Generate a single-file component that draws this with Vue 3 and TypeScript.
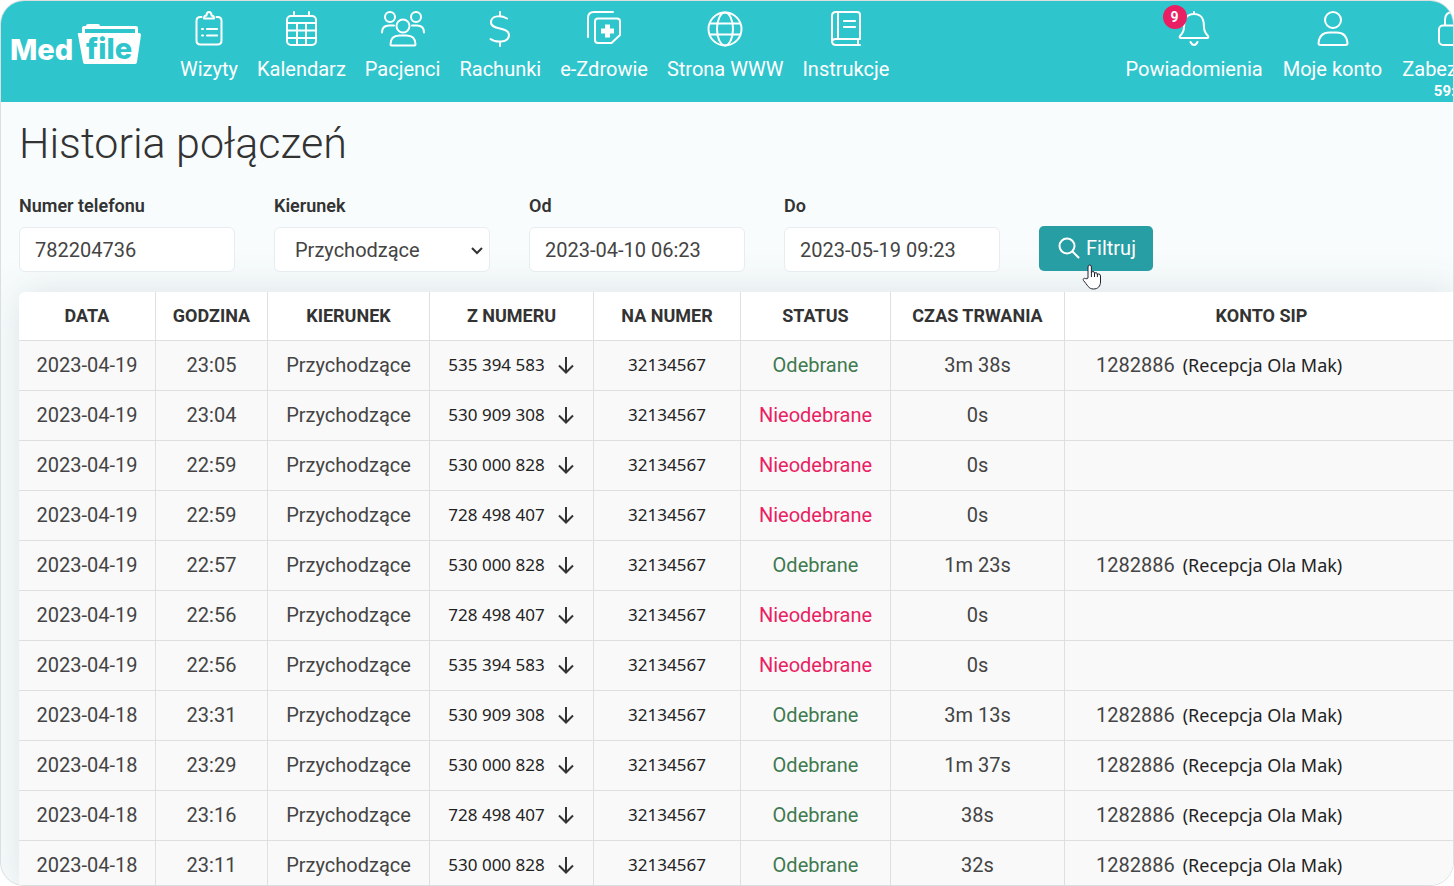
<script setup lang="ts">
import { ref } from 'vue'

interface NavItem {
  label: string
  icon: string
}

interface Call {
  date: string
  time: string
  from: string
  answered: boolean
  duration: string
  sip: boolean
}

const mainNav: NavItem[] = [
  { label: 'Wizyty', icon: 'clipboard' },
  { label: 'Kalendarz', icon: 'calendar' },
  { label: 'Pacjenci', icon: 'people' },
  { label: 'Rachunki', icon: 'dollar' },
  { label: 'e-Zdrowie', icon: 'health' },
  { label: 'Strona WWW', icon: 'globe' },
  { label: 'Instrukcje', icon: 'book' },
]

const phone = ref('782204736')
const direction = ref('Przychodzące')
const dateFrom = ref('2023-04-10 06:23')
const dateTo = ref('2023-05-19 09:23')

const columns = ['Data', 'Godzina', 'Kierunek', 'Z numeru', 'Na numer', 'Status', 'Czas trwania', 'Konto SIP']

const calls: Call[] = [
  { date: '2023-04-19', time: '23:05', from: '535 394 583', answered: true, duration: '3m 38s', sip: true },
  { date: '2023-04-19', time: '23:04', from: '530 909 308', answered: false, duration: '0s', sip: false },
  { date: '2023-04-19', time: '22:59', from: '530 000 828', answered: false, duration: '0s', sip: false },
  { date: '2023-04-19', time: '22:59', from: '728 498 407', answered: false, duration: '0s', sip: false },
  { date: '2023-04-19', time: '22:57', from: '530 000 828', answered: true, duration: '1m 23s', sip: true },
  { date: '2023-04-19', time: '22:56', from: '728 498 407', answered: false, duration: '0s', sip: false },
  { date: '2023-04-19', time: '22:56', from: '535 394 583', answered: false, duration: '0s', sip: false },
  { date: '2023-04-18', time: '23:31', from: '530 909 308', answered: true, duration: '3m 13s', sip: true },
  { date: '2023-04-18', time: '23:29', from: '530 000 828', answered: true, duration: '1m 37s', sip: true },
  { date: '2023-04-18', time: '23:16', from: '728 498 407', answered: true, duration: '38s', sip: true },
  { date: '2023-04-18', time: '23:11', from: '530 000 828', answered: true, duration: '32s', sip: true },
]
</script>

<template>
  <div class="app">
    <header class="topbar">
      <a href="#" class="logo" aria-label="Med file">
        <svg width="136" height="46" viewBox="-2 -2 136 46">
          <text x="-1" y="37" class="logo-text" fill="#fff">Med</text>
          <path d="M71 10V5q0-2 2-2h2q0-2 2-2h10q2 0 2 2h36q2 0 2 2v5h-3V6H74v4z" fill="#fff" />
          <path d="M68 10h60q2 0 2 2l-4 27q0 2-3 2H75q-3 0-3-2L67 12q-1-2 1-2z" fill="#fff" />
          <text x="75" y="36" class="logo-text" fill="#2fc5cd">file</text>
        </svg>
      </a>
      <nav class="nav">
        <a v-for="item in mainNav" :key="item.label" href="#" class="nav-item">
          <svg class="icon" width="44" height="36" viewBox="0 0 44 36">
            <g v-if="item.icon === 'clipboard'">
              <path d="M15 4.500h-1q-4 0-4 4V28q0 4 4 4h17q4 0 4-4V8.500q0-4-4-4h-1" transform="translate(-.5 1.500)" />
              <path d="M17 7.500q0-3 2.500-3Q19.500 1 22 1t2.500 3.500Q27 4.500 27 7.500z" />
              <path d="M20 18h10M20 24.500h10M15 18h1M15 24.500h1" stroke-width="2.200" />
            </g>
            <g v-else-if="item.icon === 'calendar'">
              <rect x="8" y="5" width="29" height="29" rx="4" />
              <path d="M15 1v4M30 1v4M8 12h29M8 19.500h29M8 27h29M18 12v22M27 12v22" />
            </g>
            <g v-else-if="item.icon === 'people'">
              <circle cx="22" cy="15" r="6.500" />
              <circle cx="9" cy="6" r="5" />
              <circle cx="35" cy="6" r="5" />
              <path d="M9.500 33.500q0-9 9-9h7q9 0 9 9 0 1-1 1h-23q-1 0-1-1zM1 21.500q0-7 7-7h5M43 21.500q0-7-7-7h-5" />
            </g>
            <path
              v-else-if="item.icon === 'dollar'"
              d="M22 1v4M22 31v4M29 7.500C24 4.500 13 3.500 13 11.500c0 8 18 4 18 12.500C31 32.500 17 31.500 12.500 28"
            />
            <g v-else-if="item.icon === 'health'">
              <path d="M6 26V7q0-6 6-6h19" />
              <path d="M16 7.500h19q3 0 3 3V24l-8.500 8H16q-3 0-3-3V10.500q0-3 3-3z" />
              <path d="M25.500 13.500v13M19 20h13" stroke-width="5" stroke-linecap="butt" />
            </g>
            <g v-else-if="item.icon === 'globe'">
              <circle cx="22" cy="18" r="16.500" />
              <ellipse cx="22" cy="18" rx="8" ry="16.500" />
              <path d="M7 12.500h30M7 23.500h30" />
            </g>
            <g v-else>
              <path d="M36 28V4q0-3-3-3H12Q8 1 8 5v25q0 4 4 4h24M36 28H12q-4 0-4 3M34 28v6M14 1v27" />
              <path d="M20 10h11M20 16h11" stroke-width="2.200" />
            </g>
          </svg>
          <span>{{ item.label }}</span>
        </a>
      </nav>
      <nav class="nav nav-account">
        <a href="#" class="nav-item">
          <svg class="icon" width="44" height="36" viewBox="0 0 44 36">
            <path d="M22 1v2M22 3C13 3 12 10 12 16q0 5-4 9-1 2 1 2h26q2 0 1-2-4-4-4-9c0-6-1-13-10-13zM18.500 31q1.500 3 3.500 3t3.500-3" />
          </svg>
          <span class="badge">9</span>
          <span>Powiadomienia</span>
        </a>
        <a href="#" class="nav-item">
          <svg class="icon" width="44" height="36" viewBox="0 0 44 36">
            <circle cx="22" cy="9" r="8" />
            <path d="M7.500 32q1-10.500 11-10.500h7q10 0 11 10.500 0 2-2 2h-25q-2 0-2-2z" />
          </svg>
          <span>Moje konto</span>
        </a>
        <a href="#" class="nav-item">
          <svg class="icon" width="44" height="36" viewBox="0 0 44 36">
            <rect x="8" y="14.500" width="28" height="19.500" rx="4" />
            <path d="M14 14V9q0-8 8-8t8 8v5" />
          </svg>
          <span>Zabezpiecz</span>
          <span class="timer">59:59</span>
        </a>
      </nav>
    </header>

    <main class="content">
      <h1>Historia połączeń</h1>

      <form class="filters" @submit.prevent>
        <div class="field">
          <label for="phone">Numer telefonu</label>
          <input id="phone" v-model="phone" type="text" />
        </div>
        <div class="field">
          <label for="direction">Kierunek</label>
          <div class="select-wrap">
            <select id="direction" v-model="direction">
              <option>Przychodzące</option>
              <option>Wychodzące</option>
            </select>
            <svg class="chevron" width="12" height="8" viewBox="0 0 12 8"><path d="M1 1l5 5 5-5" /></svg>
          </div>
        </div>
        <div class="field">
          <label for="from">Od</label>
          <input id="from" v-model="dateFrom" type="text" />
        </div>
        <div class="field">
          <label for="to">Do</label>
          <input id="to" v-model="dateTo" type="text" />
        </div>
        <div class="submit-wrap">
          <button type="submit" class="submit">
            <svg width="22" height="22" viewBox="0 0 22 22"><circle cx="9" cy="9" r="7.500" /><path d="M14.500 14.500L20.500 20.500" /></svg>
            Filtruj
          </button>
          <svg class="pointer" width="20" height="26" viewBox="0 0 20 26">
            <path d="M6 14V3q0-2 1.700-2t1.700 2v6q0-1.500 1.500-1.500T12.500 9v1q0-1.300 1.400-1.300T15.300 10v1q0-1 1.500-1t1.700 2v6c0 4-2.500 7-7 7-5 0-6-4-10-8.500-1-2 1-3 2.500-1.500z" />
            <path d="M9.400 9v4M12.500 10v3M15.400 11v2" />
          </svg>
        </div>
      </form>

      <div class="table-card">
        <table>
          <colgroup>
            <col class="c-date" />
            <col class="c-time" />
            <col class="c-direction" />
            <col class="c-from" />
            <col class="c-to" />
            <col class="c-status" />
            <col class="c-duration" />
            <col />
          </colgroup>
          <thead>
            <tr>
              <th v-for="name in columns" :key="name" scope="col">{{ name }}</th>
            </tr>
          </thead>
          <tbody>
            <tr v-for="(call, i) in calls" :key="i">
              <td>{{ call.date }}</td>
              <td>{{ call.time }}</td>
              <td>Przychodzące</td>
              <td>
                <div class="number-from">
                  <span class="alt">{{ call.from }}</span>
                  <svg width="18" height="18" viewBox="0 0 18 18"><path d="M9 1v15M2 9.500L9 16.500l7-7" /></svg>
                </div>
              </td>
              <td class="alt">32134567</td>
              <td :class="call.answered ? 'answered' : 'missed'">{{ call.answered ? 'Odebrane' : 'Nieodebrane' }}</td>
              <td>{{ call.duration }}</td>
              <td>
                <div v-if="call.sip" class="sip">
                  <span>1282886</span>
                  <span class="alt">(Recepcja Ola Mak)</span>
                </div>
              </td>
            </tr>
          </tbody>
        </table>
      </div>
    </main>
  </div>
</template>

<style>
body {
  margin: 0;
  background: #fff;
}
</style>

<style scoped>
.app {
  box-sizing: border-box;
  height: 100vh;
  overflow: hidden;
  border: 1px solid #dcdfe0;
  border-radius: 24px;
  background: #f8fcfd;
  color: #333;
  font-family: Roboto, "Liberation Sans", sans-serif;
  font-size: 20px;
  line-height: 24px;
}

.topbar {
  display: flex;
  align-items: flex-start;
  height: 101px;
  padding-left: 8px;
  background: #2fc5cd;
}

.logo {
  flex: none;
  margin: 20px 35px 0 0;
}

.logo svg {
  display: block;
}

.logo-text {
  font-family: Inter, "Liberation Sans", sans-serif;
  font-size: 29px;
  font-weight: 800;
}

.nav {
  display: flex;
  flex: none;
  gap: 19px;
  padding-top: 10px;
}

.nav-account {
  gap: 20px;
  margin-left: auto;
  margin-right: -51px;
}

.nav-item {
  position: relative;
  display: flex;
  flex-direction: column;
  align-items: center;
  color: #fff;
  text-decoration: none;
  white-space: nowrap;
}

.icon {
  margin-bottom: 10px;
  fill: none;
  stroke: #fff;
  stroke-width: 2;
  stroke-linecap: round;
  stroke-linejoin: round;
}

.badge {
  position: absolute;
  top: -6px;
  left: 37px;
  width: 24px;
  height: 24px;
  border-radius: 12px;
  background: #ea1e63;
  font-size: 14px;
  font-weight: 700;
  text-align: center;
}

.timer {
  font-size: 15px;
  font-weight: 700;
  line-height: 20px;
}

.content {
  padding: 15px 0 0 18px;
}

h1 {
  margin: 0;
  font-size: 43px;
  font-weight: 300;
  line-height: 52px;
}

.filters {
  display: flex;
  align-items: flex-end;
  gap: 39px;
  margin-top: 25px;
}

.field {
  width: 216px;
}

.field label {
  display: block;
  margin-bottom: 9px;
  font-size: 18px;
  font-weight: 600;
}

.field input,
.field select {
  display: block;
  box-sizing: border-box;
  width: 100%;
  height: 45px;
  padding: 0 15px;
  border: 1px solid #e6ecf0;
  border-radius: 6px;
  background: #fff;
  color: #444;
  font: inherit;
}

.field select {
  padding: 0 20px;
  appearance: none;
}

.select-wrap {
  position: relative;
}

.chevron {
  position: absolute;
  top: 20px;
  right: 7px;
  fill: none;
  stroke: #333;
  stroke-width: 2;
  pointer-events: none;
}

.submit-wrap {
  position: relative;
  align-self: flex-end;
  padding-bottom: 1px;
}

.submit {
  display: flex;
  align-items: center;
  gap: 6px;
  height: 45px;
  padding: 0 17px 2px 19px;
  border: 0;
  border-radius: 5px;
  background: #279ea4;
  color: #fff;
  font: inherit;
}

.submit svg {
  fill: none;
  stroke: #fff;
  stroke-width: 2;
  stroke-linecap: round;
}

.pointer {
  position: absolute;
  top: 38px;
  left: 43px;
  fill: #fff;
  stroke: #223;
  stroke-width: 1;
}

.table-card {
  margin: 20px -6px 0 0;
  border-radius: 6px;
  background: #fff;
  box-shadow: 0 0 40px rgba(60, 85, 85, 0.15);
}

table {
  width: 100%;
  table-layout: fixed;
  border-collapse: separate;
  border-spacing: 0;
}

.c-date { width: 137px; }
.c-time { width: 112px; }
.c-direction { width: 162px; }
.c-from { width: 164px; }
.c-to { width: 147px; }
.c-status { width: 150px; }
.c-duration { width: 174px; }

th,
td {
  box-sizing: border-box;
  height: 50px;
  padding: 0 0 2px;
  border-right: 1px solid #dfdfdf;
  border-bottom: 1px solid #dfdfdf;
  text-align: center;
  white-space: nowrap;
}

th {
  height: 49px;
  padding: 0;
  font-size: 18px;
  font-weight: 700;
  text-transform: uppercase;
}

td {
  background: #f9f9f9;
  color: #444;
}

.alt {
  color: #222;
  font-family: "Noto Sans", "Open Sans", sans-serif;
  font-size: 17px;
}

.number-from {
  display: flex;
  align-items: center;
  justify-content: center;
  gap: 12px;
}

.number-from svg {
  fill: none;
  stroke: #333;
  stroke-width: 2;
}

.sip {
  display: flex;
  align-items: center;
  gap: 8px;
  padding-left: 31px;
}

.sip .alt {
  font-size: 18px;
}

.answered {
  color: #3f7a50;
}

.missed {
  color: #ea1e63;
}
</style>
